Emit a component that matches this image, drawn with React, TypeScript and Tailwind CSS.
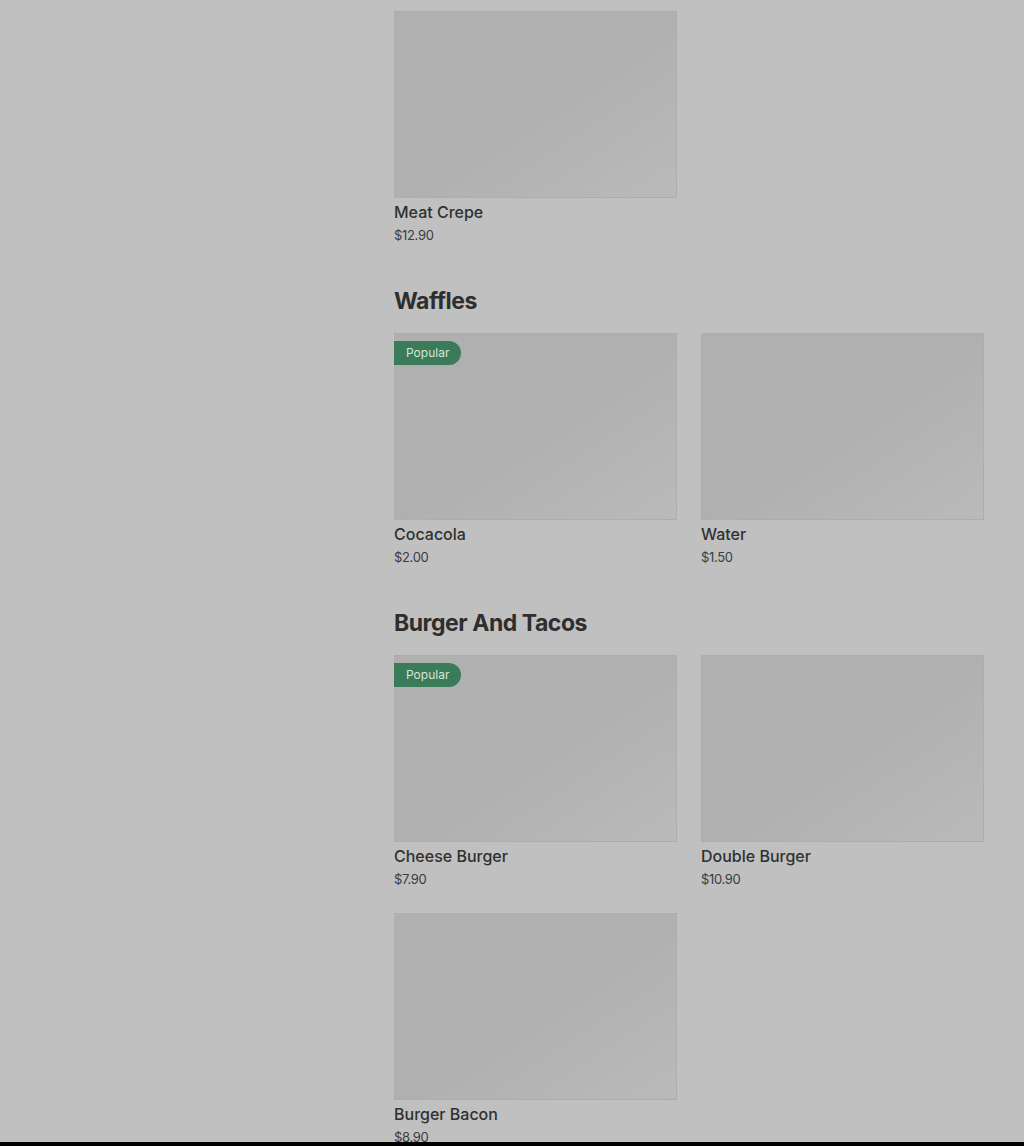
import React from 'react';

type Item = { name: string; price: string; popular?: boolean };

const SECTIONS: { title: string | null; items: Item[] }[] = [
  { title: null, items: [{ name: 'Meat Crepe', price: '$12.90' }] },
  {
    title: 'Waffles',
    items: [
      { name: 'Cocacola', price: '$2.00', popular: true },
      { name: 'Water', price: '$1.50' },
    ],
  },
  {
    title: 'Burger And Tacos',
    items: [
      { name: 'Cheese Burger', price: '$7.90', popular: true },
      { name: 'Double Burger', price: '$10.90' },
      { name: 'Burger Bacon', price: '$8.90' },
    ],
  },
];

function MenuCard({ item }: { item: Item }) {
  return (
    <div className="flex flex-col">
      <div className="relative h-[187px] w-full border border-[#adadad] bg-gradient-to-br from-[#b0b0b0] from-50% to-[#bababa]">
        {item.popular && (
          <span className="absolute left-[-1px] top-[7px] flex h-6 items-center rounded-r-full bg-[#3a7b5a] pl-3 pr-3 text-[12px] text-[#d6e4dc]">
            Popular
          </span>
        )}
      </div>
      <div className="mt-1 text-[16px] leading-5 font-medium text-[#303030]">{item.name}</div>
      <div className="mt-[3px] text-[13px] leading-5 text-[#3c3c3c] tracking-tight">{item.price}</div>
    </div>
  );
}

export default function App() {
  return (
    <div
      className="min-h-screen bg-[#c0c0c0] flex"
      style={{ fontFamily: 'Inter, "Noto Sans", sans-serif' }}
    >
      <aside className="w-[394px] shrink-0" />
      <main className="flex-1 pr-10 pt-[11px]">
        {SECTIONS.map((section, idx) => (
          <section key={idx} className={idx > 0 ? 'mt-10' : ''}>
            {section.title && (
              <h2 className="mb-4 h-8 text-[23px] leading-8 font-bold tracking-[-0.02em] text-[#2e2e2e]">
                {section.title}
              </h2>
            )}
            <div className="grid grid-cols-2 gap-x-6 gap-y-6">
              {section.items.map((item) => (
                <MenuCard key={item.name} item={item} />
              ))}
            </div>
          </section>
        ))}
      </main>
      <div className="fixed bottom-0 left-0 h-1 w-full bg-black" />
    </div>
  );
}
